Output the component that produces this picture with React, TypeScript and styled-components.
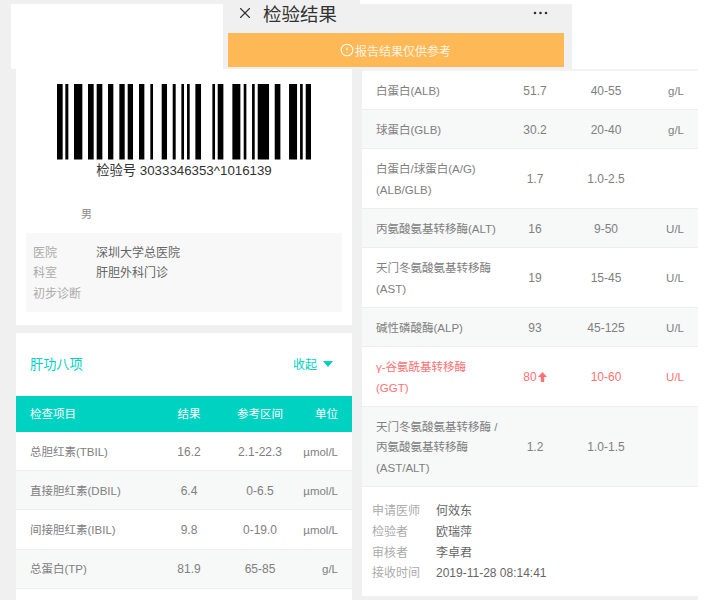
import { createGlobalStyle, styled } from 'styled-components';
import { CircleAlert, X } from 'lucide-react';

const GRAY = '#f0f0f0';
const TEAL = '#00d2c1';
const TEXT = '#808080';
const RED = '#ff7375';

const GlobalStyle = createGlobalStyle`
  html, body {
    margin: 0;
    padding: 0;
    background: #fff;
    font-family: "Liberation Sans", "Noto Sans CJK SC", sans-serif;
  }
`;

const Page = styled.div`
  width: 704px;
  height: 600px;
  overflow: hidden;
  background: #fff;
  display: flex;
  flex-direction: column;
`;

const TopStrip = styled.div`
  width: 360px;
  height: 4px;
  flex: none;
  background: ${GRAY};
`;

const Band = styled.div`
  height: 65px;
  flex: none;
  display: flex;
`;

const BandGutter = styled.div`
  width: 11px;
  background: ${GRAY};
`;

const BlankPanel = styled.div`
  width: 212px;
  background: #fff;
`;

const Nav = styled.div`
  width: 349px;
  background: ${GRAY};
  padding: 0 8px 2px 5px;
  box-sizing: border-box;
  display: flex;
  flex-direction: column;
`;

const NavBar = styled.div`
  height: 29px;
  box-sizing: border-box;
  display: flex;
  align-items: center;
  padding: 0 16px 11px 8px;
  color: #333;
`;

const NavTitle = styled.span`
  font-size: 18.5px;
  margin-left: 9px;
  flex: 1;
`;

const Notice = styled.div`
  flex: 1;
  background: #ffb856;
  color: #fff4e2;
  font-size: 12px;
  display: flex;
  align-items: center;
  justify-content: center;
  gap: 1px;

  svg {
    color: #fff;
    margin-left: -1px;
  }
`;

const Columns = styled.div`
  flex: 1;
  min-height: 0;
  display: flex;
`;

const LeftColumn = styled.div`
  width: 362px;
  box-sizing: border-box;
  padding: 0 10px 0 16px;
  background: ${GRAY};
  display: flex;
  flex-direction: column;
  gap: 8px;
`;

const PatientCard = styled.div`
  height: 256px;
  flex: none;
  background: #fff;
  padding-top: 15px;
  box-sizing: border-box;
`;

const Barcode = styled.svg`
  display: block;
  width: 254.4px;
  height: 75.5px;
  margin: 0 auto;
`;

const BarcodeLabel = styled.div`
  margin-top: 1px;
  text-align: center;
  font-size: 13.3px;
  line-height: 20px;
  color: #333;
`;

const Gender = styled.div`
  margin-top: 23px;
  padding-left: 65px;
  font-size: 11px;
  line-height: 20px;
  color: #8a8a8a;
`;

const InfoBox = styled.div`
  margin: 9px 10px 0;
  padding: 10px 7px 8px;
  background: #f8f8f8;
`;

const InfoRow = styled.div`
  display: grid;
  grid-template-columns: ${props => props.$labelWidth}px 1fr;
  font-size: 12px;
  line-height: 20.6px;
`;

const InfoLabel = styled.span`
  color: #ababab;
`;

const InfoValue = styled.span`
  color: #666;
`;

const ResultCard = styled.div`
  flex: 1;
  min-height: 0;
  background: #fff;
`;

const SectionHead = styled.div`
  height: 63px;
  box-sizing: border-box;
  display: flex;
  align-items: center;
  justify-content: space-between;
  padding: 0 19px 2px 14px;
  color: ${TEAL};
`;

const SectionTitle = styled.span`
  font-size: 13.2px;
`;

const Toggle = styled.span`
  display: flex;
  align-items: center;
  gap: 6px;
  font-size: 12px;
`;

const Caret = styled.span`
  width: 0;
  height: 0;
  border-left: 5px solid transparent;
  border-right: 5px solid transparent;
  border-top: 6px solid ${TEAL};
`;

const Row = styled.div`
  display: grid;
  grid-template-columns: 130px 58px 84px 36px;
  align-items: center;
  padding: 9.8px 14px 7.8px;
  border-bottom: 1px solid #eeeeee;
  font-size: 11.5px;
  line-height: 20.6px;
  color: ${props => (props.$flagged ? RED : TEXT)};
  background: ${props => (props.$alt ? '#f7f8f8' : '#fff')};
`;

const TableHead = styled(Row)`
  height: 36px;
  box-sizing: border-box;
  padding-top: 0;
  padding-bottom: 0;
  border: none;
  background: ${TEAL};
  color: #fff;
`;

const Name = styled.span`
  white-space: pre-line;
`;

const Centered = styled.span`
  text-align: center;
  white-space: nowrap;
  font-size: ${props => (props.$head ? '11.5px' : '12px')};
`;

const Unit = styled.span`
  text-align: right;
  white-space: nowrap;
  justify-self: end;
`;

const ArrowUp = styled.svg`
  width: 9px;
  height: 10px;
  margin-left: 1px;
  vertical-align: -1px;
`;

const RightPanel = styled.div`
  width: 336px;
  flex: none;
  box-sizing: border-box;
  background: #fff;
  border-top: 2px solid #f2f2f2;
  border-bottom: 4px solid ${GRAY};
`;

const Signoff = styled.div`
  padding: 14px 10px;
`;

const BARS = [
  [170, 187], [195, 204], [221, 246], [263, 280], [289, 306], [323, 339], [357, 373], [382, 398],
  [416, 432], [450, 458], [484, 500], [517, 526], [543, 551], [560, 568], [585, 602], [636, 644],
  [652, 669], [696, 720], [730, 738], [755, 763], [772, 806], [823, 840], [866, 890], [899, 907],
  [916, 933],
];

const leftRows = [
  { name: '总胆红素(TBIL)', value: '16.2', range: '2.1-22.3', unit: 'µmol/L' },
  { name: '直接胆红素(DBIL)', value: '6.4', range: '0-6.5', unit: 'µmol/L' },
  { name: '间接胆红素(IBIL)', value: '9.8', range: '0-19.0', unit: 'µmol/L' },
  { name: '总蛋白(TP)', value: '81.9', range: '65-85', unit: 'g/L' },
];

const rightRows = [
  { name: '白蛋白(ALB)', value: '51.7', range: '40-55', unit: 'g/L' },
  { name: '球蛋白(GLB)', value: '30.2', range: '20-40', unit: 'g/L' },
  { name: '白蛋白/球蛋白(A/G)\n(ALB/GLB)', value: '1.7', range: '1.0-2.5', unit: '' },
  { name: '丙氨酸氨基转移酶(ALT)', value: '16', range: '9-50', unit: 'U/L' },
  { name: '天门冬氨酸氨基转移酶\n(AST)', value: '19', range: '15-45', unit: 'U/L' },
  { name: '碱性磷酸酶(ALP)', value: '93', range: '45-125', unit: 'U/L' },
  { name: 'γ-谷氨酰基转移酶\n(GGT)', value: '80', range: '10-60', unit: 'U/L', flagged: true },
  { name: '天门冬氨酸氨基转移酶 /\n丙氨酸氨基转移酶\n(AST/ALT)', value: '1.2', range: '1.0-1.5', unit: '' },
];

const hospital = [
  ['医院', '深圳大学总医院'],
  ['科室', '肝胆外科门诊'],
  ['初步诊断', ''],
];

const signoff = [
  ['申请医师', '何效东'],
  ['检验者', '欧瑞萍'],
  ['审核者', '李卓君'],
  ['接收时间', '2019-11-28 08:14:41'],
];

function ResultRows({ rows }) {
  return rows.map((row, i) => (
    <Row key={row.name} $alt={i % 2 === 1} $flagged={row.flagged}>
      <Name>{row.name}</Name>
      <Centered>
        {row.value}
        {row.flagged && (
          <ArrowUp viewBox="0 0 9 10">
            <path d="M4.5 0 9 5H6.2v5H2.8V5H0z" fill={RED} />
          </ArrowUp>
        )}
      </Centered>
      <Centered>{row.range}</Centered>
      <Unit>{row.unit}</Unit>
    </Row>
  ));
}

export default function App() {
  return (
    <Page>
      <GlobalStyle />
      <TopStrip />
      <Band>
        <BandGutter />
        <BlankPanel />
        <Nav>
          <NavBar>
            <X size={18} strokeWidth={1.5} />
            <NavTitle>检验结果</NavTitle>
            <svg width="15" height="4" viewBox="0 0 15 4">
              <circle cx="2" cy="2" r="1.3" fill="#333" />
              <circle cx="7.5" cy="2" r="1.3" fill="#333" />
              <circle cx="13" cy="2" r="1.3" fill="#333" />
            </svg>
          </NavBar>
          <Notice>
            <CircleAlert size={14} strokeWidth={1.8} />
            报告结果仅供参考
          </Notice>
        </Nav>
      </Band>
      <Columns>
        <LeftColumn>
          <PatientCard>
            <Barcode viewBox="170 0 763 226" preserveAspectRatio="none">
              {BARS.map(([from, to]) => (
                <rect key={from} x={from} y="0" width={to - from} height="226" fill="#000" />
              ))}
            </Barcode>
            <BarcodeLabel>检验号 3033346353^1016139</BarcodeLabel>
            <Gender>男</Gender>
            <InfoBox>
              {hospital.map(([label, value]) => (
                <InfoRow key={label} $labelWidth={63}>
                  <InfoLabel>{label}</InfoLabel>
                  <InfoValue>{value}</InfoValue>
                </InfoRow>
              ))}
            </InfoBox>
          </PatientCard>
          <ResultCard>
            <SectionHead>
              <SectionTitle>肝功八项</SectionTitle>
              <Toggle>
                收起
                <Caret />
              </Toggle>
            </SectionHead>
            <TableHead>
              <Name>检查项目</Name>
              <Centered $head>结果</Centered>
              <Centered $head>参考区间</Centered>
              <Unit>单位</Unit>
            </TableHead>
            <ResultRows rows={leftRows} />
          </ResultCard>
        </LeftColumn>
        <RightPanel>
          <ResultRows rows={rightRows} />
          <Signoff>
            {signoff.map(([label, value]) => (
              <InfoRow key={label} $labelWidth={64}>
                <InfoLabel>{label}</InfoLabel>
                <InfoValue>{value}</InfoValue>
              </InfoRow>
            ))}
          </Signoff>
        </RightPanel>
      </Columns>
    </Page>
  );
}
